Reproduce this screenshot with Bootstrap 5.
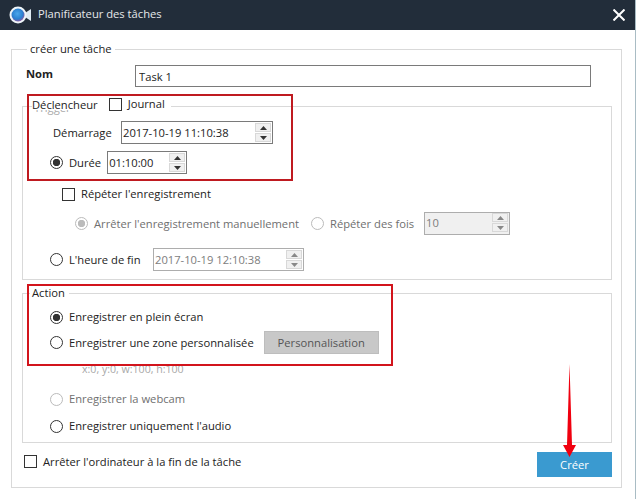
<!DOCTYPE html>
<html lang="fr">
<head>
    <meta charset="UTF-8">
    <meta name="viewport" content="width=device-width, initial-scale=1.0">
    <title>Planificateur des tâches</title>
    <link rel="stylesheet" href="https://cdn.jsdelivr.net/npm/bootstrap@5.3.0/dist/css/bootstrap.min.css">
    <style>
        body { margin: 0; background: #fff; color: #222; font-family: "Open Sans", "Noto Sans", sans-serif; font-size: 11.2px; line-height: 16px; white-space: nowrap; }
        .dlg { width: 636px; height: 499px; position: relative; overflow: hidden; background: #fff; border-right: 1px solid #a9bcc4; }
        .dlg-title { height: 30px; background: #222d3a; color: #e6e8ea; padding-left: 9px; gap: 6px; }
        .dlg-title-txt { margin-top: -2px; }
        .dlg-x { margin-left: auto; margin-right: 10px; margin-top: -1px; }
        .dlg-main { padding: 19px 13px 0 11px; }
        .grp { border: 1px solid #d9d9d9; }
        .grp-outer { height: 439px; padding: 0 10px; }
        .grp-inner { width: 590px; padding-left: 27px; }
        .grp-legend { height: 16px; background: #fff; width: fit-content; padding: 0 3px; }
        .leg-outer { margin-top: -9px; margin-left: 5px; }
        .leg-trig { margin-top: -11px; margin-left: -18px; position: relative; padding: 0 6px 0 0; gap: 6px; }
        .leg-trig .form-check-input { margin-left: 5px; }
        .leg-ghost { position: absolute; left: 2px; top: 4px; color: #aaa; }
        .leg-front { position: relative; background: #fff; height: 11px; line-height: 11px; }
        .leg-act { margin-top: -9px; margin-left: -20px; padding: 0 4px 0 2px; }
        .nom-row { margin-top: 8px; padding-left: 4px; }
        .nom-label { width: 109px; font-weight: 700; margin-top: -4px; }
        .form-control.nom-input { width: 456px; height: 22px; min-height: 0; padding: 0 3px; border: 1px solid #7a7a7a; border-radius: 0; font-size: inherit; color: #222; }
        .row-fix { height: 23px; }
        .row-txt { height: 16px; }
        .mt-start { margin-top: 9px; padding-left: 3px; }
        .start-label { width: 68px; }
        .mt-dur { margin-top: 7px; }
        .mt-rep { margin-top: 12px; padding-left: 12px; }
        .mt-opts { margin-top: 10px; padding-left: 25px; }
        .mt-end { margin-top: 13px; }
        .end-label { width: 103px; }
        .trig-pad { padding-bottom: 8px; }
        .act-pad { padding-bottom: 8px; }
        .form-check-input { width: 13px; height: 13px; margin: 0; flex-shrink: 0; border: 1px solid #333; background-color: #fff; }
        .form-check-input[type=checkbox] { border-radius: 0; }
        .form-check-input:checked[type=radio] { background-color: #fff; border-color: #333; background-image: radial-gradient(circle, #333 3.4px, transparent 4px); }
        .form-check-input:disabled { opacity: 1; border-color: #bbb; }
        .form-check-input:disabled:checked[type=radio] { border-color: #bbb; background-image: radial-gradient(circle, #bbb 3.4px, transparent 4px); }
        .chk { gap: 6px; }
        .dim { color: #6f6f6f; }
        .spin { height: 23px; border: 1px solid #7a7a7a; background: #fff; padding: 0 1px 0 1px; }
        .spin input { border: 0; outline: 0; background: transparent; padding: 0; min-width: 0; flex: 1; color: #222; font: inherit; }
        .spin-off { border-color: #adadad; background: #fff; }
        .spin-off input { color: #7d7d7d; }
        .spin-gray { background: #f0f0f0; align-items: flex-start !important; }
        .spin-gray input { height: 18px; }
        .spin-btns { width: 16px; gap: 1px; }
        .spin-btn { height: 9px; background: #f0f0f0; border: 1px solid #d8d8d8; }
        .w-start { width: 152px; }
        .w-dur { width: 80px; margin-left: 6px; }
        .w-rep { width: 86px; margin-left: 10px; }
        .w-end { width: 151px; }
        .opt-1 { width: 236px; }
        .mt-e1 { margin-top: 8px; }
        .mt-e2 { margin-top: 6px; }
        .btn.btn-perso { width: 115px; height: 23px; margin-left: 10px; padding: 0; background: #c8c8c8; border: 1px solid #bdbdbd; border-radius: 0; color: #555; font-size: inherit; line-height: 1; }
        .coords { margin-top: 7px; padding-left: 32px; color: #a8a8a8; font-size: 10.6px; }
        .mt-web { margin-top: 14px; }
        .mt-aud { margin-top: 11px; }
        .foot { margin-top: 9px; padding-left: 2px; }
        .foot-chk { margin-top: -6px; }
        .btn.btn-creer { width: 75px; height: 25px; margin-left: auto; margin-right: -1px; padding: 0; background: #3a9ad0; border: 0; border-radius: 0; color: #fff; font-size: inherit; line-height: 1; }
        .mark-box { position: absolute; border: 2px solid #bf1a20; pointer-events: none; }
        .mark-a { left: 27px; top: 94px; width: 266px; height: 87px; }
        .mark-b { left: 27px; top: 284px; width: 366px; height: 82px; border-color: #d2141c; }
        .mark-arrow { position: absolute; left: 560px; top: 362px; }
    </style>
</head>
<body>
    <div class="dlg">
        <div class="dlg-title d-flex align-items-center">
            <svg width="23" height="20" viewBox="0 0 23 20">
                <defs>
                    <radialGradient id="lens" cx="45%" cy="40%" r="60%">
                        <stop offset="0" stop-color="#4aa6ea"/>
                        <stop offset="0.7" stop-color="#2a7fd0"/>
                        <stop offset="1" stop-color="#8a5aa0"/>
                    </radialGradient>
                </defs>
                <path d="M16 8 L22 4 V16 L16 12 Z" fill="#dfeaf2"/>
                <circle cx="9" cy="10" r="8.5" fill="#eef5f9"/>
                <circle cx="9" cy="10" r="6.5" fill="url(#lens)"/>
            </svg>
            <span class="dlg-title-txt">Planificateur des tâches</span>
            <svg class="dlg-x" width="12" height="12" viewBox="0 0 12 12">
                <path d="M0.5 0.5 L11.5 11.5 M11.5 0.5 L0.5 11.5" stroke="#fff" stroke-width="2" fill="none"/>
            </svg>
        </div>

        <div class="dlg-main">
            <div class="grp grp-outer">
                <div class="grp-legend leg-outer">créer une tâche</div>

                <div class="nom-row d-flex align-items-center">
                    <div class="nom-label">Nom</div>
                    <input type="text" class="form-control nom-input" value="Task 1">
                </div>

                <div class="grp grp-inner trig-pad" style="margin-top:19px">
                    <div class="grp-legend leg-trig d-flex align-items-center">
                        <span class="leg-ghost">Trigger</span>
                        <span class="leg-front">Déclencheur</span>
                        <input class="form-check-input" type="checkbox">
                        <span>Journal</span>
                    </div>

                    <div class="mt-start row-fix d-flex align-items-center">
                        <span class="start-label">Démarrage</span>
                        <div class="spin w-start d-flex align-items-center">
                            <input type="text" value="2017-10-19 11:10:38">
                            <div class="spin-btns d-flex flex-column">
                                <div class="spin-btn d-flex align-items-center justify-content-center"><svg width="7" height="4"><path d="M3.5 0 L7 4 H0 Z" fill="#333"/></svg></div>
                                <div class="spin-btn d-flex align-items-center justify-content-center"><svg width="7" height="4"><path d="M0 0 H7 L3.5 4 Z" fill="#333"/></svg></div>
                            </div>
                        </div>
                    </div>

                    <div class="mt-dur row-fix d-flex align-items-center">
                        <div class="chk d-flex align-items-center">
                            <input class="form-check-input" type="radio" name="fin" checked>
                            <span>Durée</span>
                        </div>
                        <div class="spin w-dur d-flex align-items-center">
                            <input type="text" value="01:10:00">
                            <div class="spin-btns d-flex flex-column">
                                <div class="spin-btn d-flex align-items-center justify-content-center"><svg width="7" height="4"><path d="M3.5 0 L7 4 H0 Z" fill="#333"/></svg></div>
                                <div class="spin-btn d-flex align-items-center justify-content-center"><svg width="7" height="4"><path d="M0 0 H7 L3.5 4 Z" fill="#333"/></svg></div>
                            </div>
                        </div>
                    </div>

                    <div class="mt-rep row-txt chk d-flex align-items-center">
                        <input class="form-check-input" type="checkbox">
                        <span>Répéter l'enregistrement</span>
                    </div>

                    <div class="mt-opts row-fix d-flex align-items-center">
                        <div class="opt-1 chk d-flex align-items-center dim">
                            <input class="form-check-input" type="radio" name="rep" checked disabled>
                            <span>Arrêter l'enregistrement manuellement</span>
                        </div>
                        <div class="chk d-flex align-items-center dim">
                            <input class="form-check-input" type="radio" name="rep" disabled>
                            <span>Répéter des fois</span>
                        </div>
                        <div class="spin spin-off spin-gray w-rep d-flex">
                            <input type="text" value="10" disabled>
                            <div class="spin-btns d-flex flex-column">
                                <div class="spin-btn d-flex align-items-center justify-content-center"><svg width="7" height="4"><path d="M3.5 0 L7 4 H0 Z" fill="#888"/></svg></div>
                                <div class="spin-btn d-flex align-items-center justify-content-center"><svg width="7" height="4"><path d="M0 0 H7 L3.5 4 Z" fill="#888"/></svg></div>
                            </div>
                        </div>
                    </div>

                    <div class="mt-end row-fix d-flex align-items-center">
                        <div class="end-label chk d-flex align-items-center">
                            <input class="form-check-input" type="radio" name="fin">
                            <span>L'heure de fin</span>
                        </div>
                        <div class="spin spin-off w-end d-flex align-items-center">
                            <input type="text" value="2017-10-19 12:10:38" disabled>
                            <div class="spin-btns d-flex flex-column">
                                <div class="spin-btn d-flex align-items-center justify-content-center"><svg width="7" height="4"><path d="M3.5 0 L7 4 H0 Z" fill="#888"/></svg></div>
                                <div class="spin-btn d-flex align-items-center justify-content-center"><svg width="7" height="4"><path d="M0 0 H7 L3.5 4 Z" fill="#888"/></svg></div>
                            </div>
                        </div>
                    </div>
                </div>

                <div class="grp grp-inner act-pad" style="margin-top:13px">
                    <div class="grp-legend leg-act">Action</div>

                    <div class="mt-e1 row-txt chk d-flex align-items-center">
                        <input class="form-check-input" type="radio" name="mode" checked>
                        <span>Enregistrer en plein écran</span>
                    </div>
                    <div class="mt-e2 row-fix d-flex align-items-center">
                        <div class="chk d-flex align-items-center">
                            <input class="form-check-input" type="radio" name="mode">
                            <span>Enregistrer une zone personnalisée</span>
                        </div>
                        <button type="button" class="btn btn-perso">Personnalisation</button>
                    </div>
                    <div class="coords row-txt">x:0, y:0, w:100, h:100</div>
                    <div class="mt-web row-txt chk d-flex align-items-center dim">
                        <input class="form-check-input" type="radio" name="mode" disabled>
                        <span>Enregistrer la webcam</span>
                    </div>
                    <div class="mt-aud row-txt chk d-flex align-items-center">
                        <input class="form-check-input" type="radio" name="mode">
                        <span>Enregistrer uniquement l'audio</span>
                    </div>
                </div>

                <div class="foot d-flex align-items-center">
                    <div class="foot-chk chk d-flex align-items-center">
                        <input class="form-check-input" type="checkbox">
                        <span>Arrêter l'ordinateur à la fin de la tâche</span>
                    </div>
                    <button type="button" class="btn btn-creer">Créer</button>
                </div>
            </div>
        </div>

        <!-- annotations rouges par dessus la capture -->
        <div class="mark-box mark-a"></div>
        <div class="mark-box mark-b"></div>
        <svg class="mark-arrow" width="20" height="98" viewBox="0 0 20 98">
            <path d="M9.5 2 L12 83 H16 L9.5 95 L3 83 H7 Z" fill="#f0000f"/>
        </svg>
    </div>

    <script src="https://cdn.jsdelivr.net/npm/bootstrap@5.3.0/dist/js/bootstrap.bundle.min.js"></script>
</body>
</html>
